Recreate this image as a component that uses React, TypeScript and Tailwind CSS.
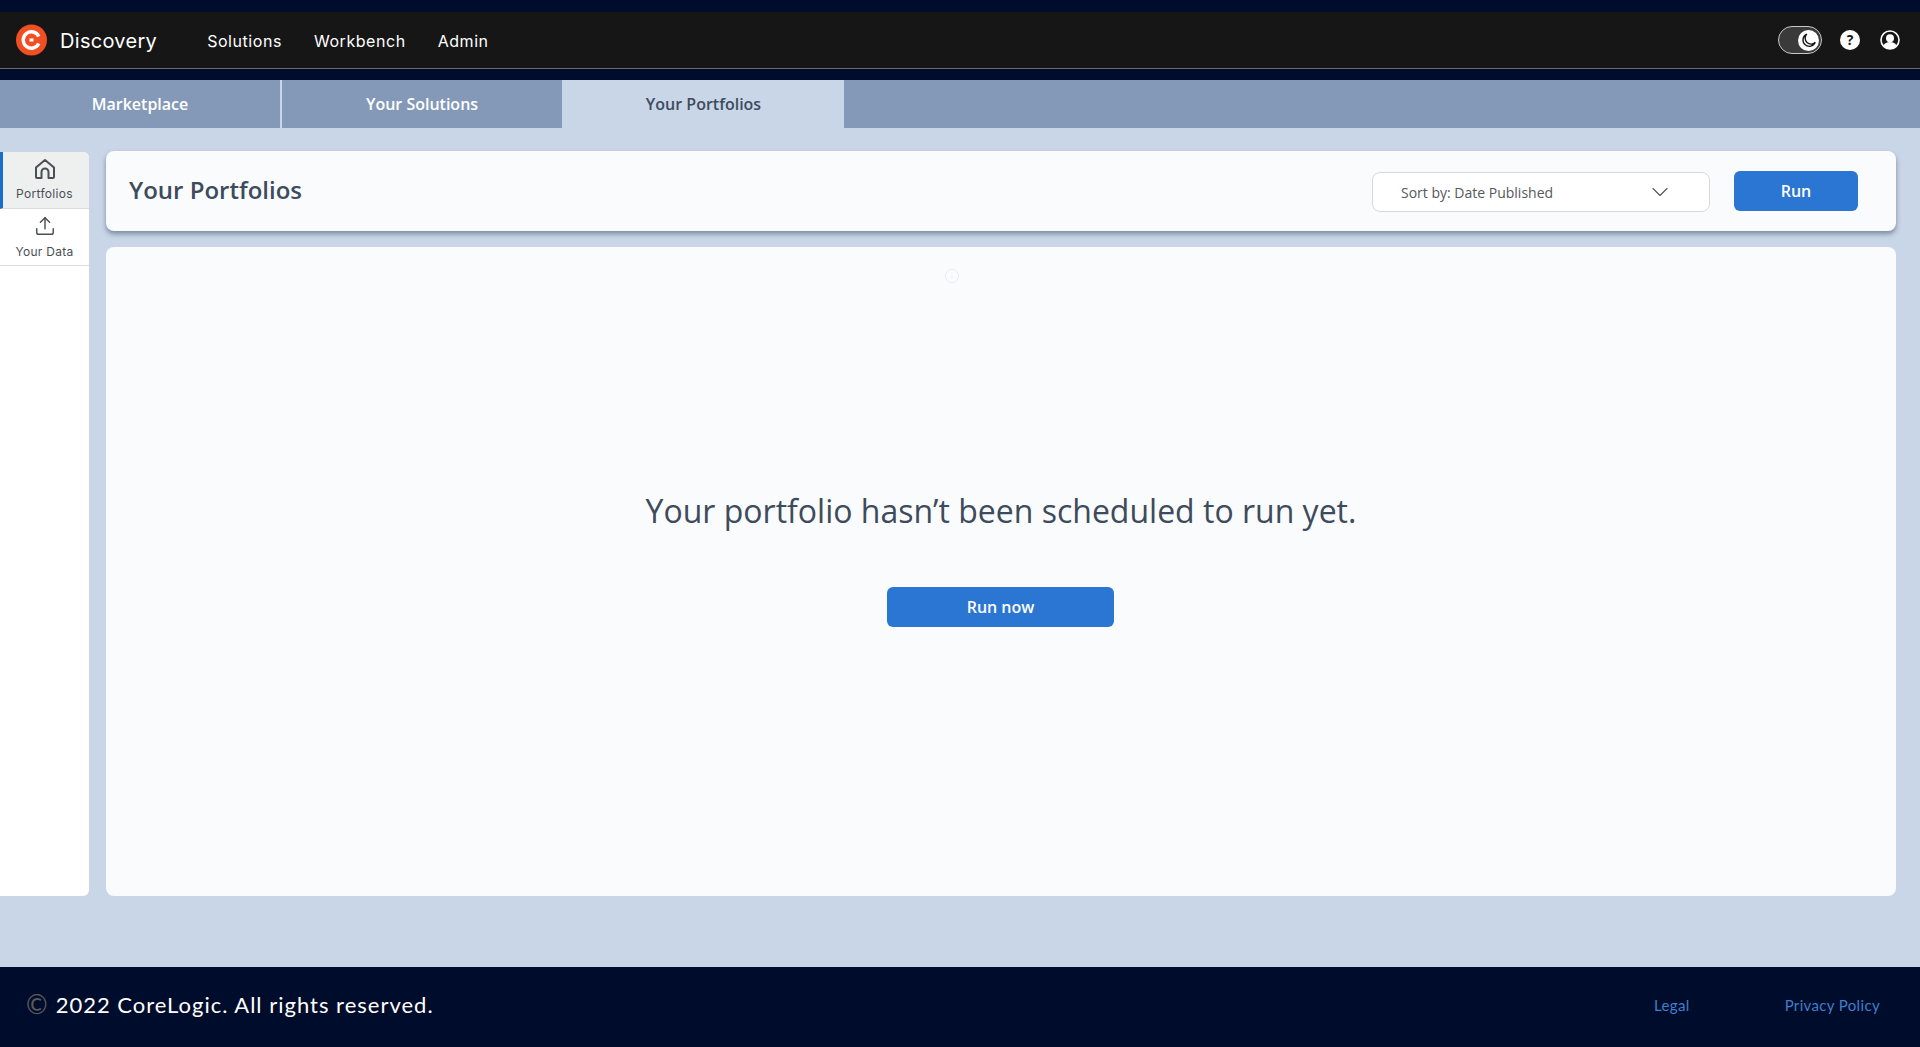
import { ChevronDown, Info, Upload } from 'lucide-react';

function Logo() {
  return (
    <svg width="31" height="32" viewBox="0 0 31 32">
      <circle cx="15.5" cy="16" r="15.5" fill="#f04e23" />
      <path d="M22.8 12.4a8.2 8.2 0 1 0 0 7.2" fill="none" stroke="#fff" strokeWidth="3.4" />
      <rect x="13.5" y="14.5" width="4" height="3" fill="#fff" />
    </svg>
  );
}

function HomeIcon() {
  return (
    <svg width="22" height="22" viewBox="0 0 22 22" fill="none" stroke="#4a4f54" strokeWidth="2" strokeLinejoin="round">
      <path d="M2 9.5 11 2l9 7.5V19a1 1 0 0 1-1 1h-4.5v-6a3.5 3.5 0 0 0-7 0v6H3a1 1 0 0 1-1-1z" />
    </svg>
  );
}

function ThemeToggle() {
  return (
    <div className="flex h-[28px] w-[44px] items-center justify-end rounded-full border border-[#c8c8c8] bg-[#3a3a3a] pr-[2px]">
      <div className="flex h-[21px] w-[21px] items-center justify-center rounded-full bg-white">
        <svg width="17" height="17" viewBox="0 0 20 20" fill="none" stroke="#161616" strokeWidth="1.6">
          <path d="M8 2.5a7.5 7.5 0 1 0 10 9.6 6.5 6.5 0 0 1-10-9.6z" />
        </svg>
      </div>
    </div>
  );
}

function HelpIcon() {
  return (
    <div className="flex h-[20px] w-[20px] items-center justify-center rounded-full bg-white text-[14px] leading-none font-bold text-[#161616] font-['Open_Sans',sans-serif]">
      ?
    </div>
  );
}

function UserIcon() {
  return (
    <svg width="20" height="20" viewBox="0 0 20 20">
      <circle cx="10" cy="10" r="9" fill="#161616" stroke="#fff" strokeWidth="1.6" />
      <circle cx="10" cy="8.2" r="4" fill="#fff" />
      <path d="M3.5 15.5c1.5-2.6 3.8-3.5 6.5-3.5s5 .9 6.5 3.5A9 9 0 0 1 10 19a9 9 0 0 1-6.5-3.5z" fill="#fff" />
    </svg>
  );
}

export default function App() {
  const navItems = ['Solutions', 'Workbench', 'Admin'];

  return (
    <div className="flex h-[1047px] flex-col overflow-hidden bg-[#c9d6e8] font-['Open_Sans',sans-serif]">
      {/* Top bar */}
      <div className="bg-[#000c2b] pt-[12px] pb-[11px]">
        <div className="flex h-[57px] items-center border-b border-[#6b6b6b] bg-[#161616] pr-[20px] pl-[16px] font-['Inter',sans-serif] text-white">
          <Logo />
          <span className="mt-[1px] ml-[13px] text-[20px] tracking-[0.3px]">Discovery</span>
          <div className="mt-[1px] ml-[50px] flex gap-[32px] text-[16px] tracking-[0.55px]">
            {navItems.map((item) => (
              <span key={item}>{item}</span>
            ))}
          </div>
          <div className="ml-auto flex items-center">
            <ThemeToggle />
            <div className="ml-[18px]">
              <HelpIcon />
            </div>
            <div className="ml-[20px]">
              <UserIcon />
            </div>
          </div>
        </div>
      </div>

      {/* Tabs */}
      <div className="flex h-[48px] bg-[#8499b8] text-[16px] font-semibold text-white">
        <div className="flex w-[282px] items-center justify-center border-r-2 border-[#c9d6e8]">Marketplace</div>
        <div className="flex w-[280px] items-center justify-center">Your Solutions</div>
        <div className="flex w-[282px] items-center justify-center bg-[#c9d6e8] pl-[1px] text-[#3d4b5c]">Your Portfolios</div>
      </div>

      {/* Main */}
      <div className="flex flex-1 gap-[17px] pt-[23px] pr-[24px]">
        <div className="mt-[1px] h-[744px] w-[89px] rounded-r-[6px] bg-white font-['Inter',sans-serif] text-[12px] leading-[16px] tracking-[0.3px] text-[#4a4f54]">
          <div className="flex h-[57px] flex-col items-center gap-[6px] rounded-tr-[6px] border-b border-[#dcdcdc] border-l-[3px] border-l-[#1a6fc9] bg-[#eef0f0] pt-[6px] pr-[3px]">
            <HomeIcon />
            <span>Portfolios</span>
          </div>
          <div className="flex h-[57px] flex-col items-center gap-[7px] border-b border-[#dcdcdc] pt-[6px]">
            <Upload size={22} strokeWidth={1.6} />
            <span>Your Data</span>
          </div>
        </div>

        <div className="flex flex-1 flex-col gap-[16px]">
          <div className="flex h-[80px] items-center rounded-[8px] bg-[#fafbfd] pr-[38px] pl-[23px] shadow-[0_3px_5px_rgba(60,75,100,0.55)]">
            <h1 className="mb-[2px] text-[24px] font-semibold text-[#3d4b5c]">Your Portfolios</h1>
            <div className="mt-[2px] ml-auto flex h-[40px] w-[338px] items-center justify-between rounded-[8px] border border-[#d8d8dc] bg-white pr-[35px] pl-[28px] text-[14px] text-[#55585c]">
              <span>Sort by: Date Published</span>
              <ChevronDown size={28} strokeWidth={1} />
            </div>
            <button className="ml-[24px] h-[40px] w-[124px] rounded-[6px] bg-[#2a76d2] text-[16px] font-semibold text-white">Run</button>
          </div>

          <div className="relative flex h-[649px] flex-col items-center rounded-[8px] bg-[#fafbfd] pt-[242px]">
            <Info size={16} strokeWidth={1.5} className="absolute top-[21px] left-[838px] text-[#e6edf5]" />
            <p className="text-[32px] leading-[44px] text-[#3d4b5c]">Your portfolio hasn’t been scheduled to run yet.</p>
            <button className="mt-[54px] mr-[1px] h-[40px] w-[227px] rounded-[6px] bg-[#2a76d2] text-[16px] font-semibold text-white">Run now</button>
          </div>
        </div>
      </div>

      {/* Footer */}
      <div className="flex h-[80px] items-center bg-[#000c2b] pr-[40px] pb-[6px] pl-[26px] font-['Lato',sans-serif]">
        <span className="text-[26px] leading-none text-[#5b5b5b]">©</span>
        <span className="ml-[8px] text-[22px] tracking-[1px] text-white">2022 CoreLogic. All rights reserved.</span>
        <div className="ml-auto mt-[3px] flex gap-[95px] text-[15px] tracking-[0.35px] text-[#3f7fcc]">
          <span>Legal</span>
          <span>Privacy Policy</span>
        </div>
      </div>
    </div>
  );
}
